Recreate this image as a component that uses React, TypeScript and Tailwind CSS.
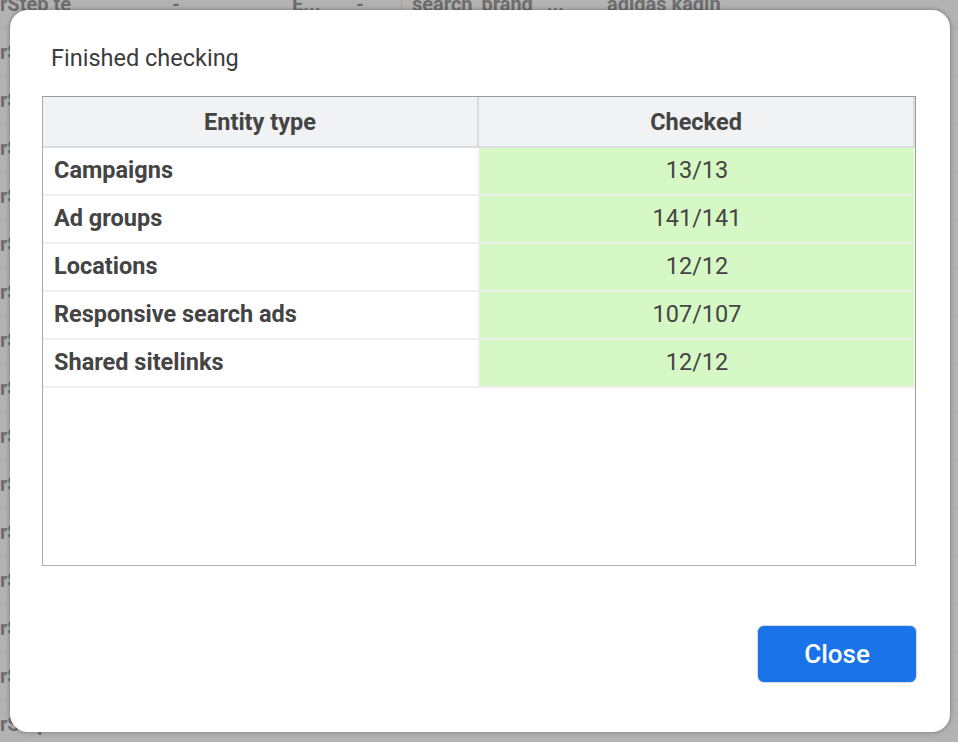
import React from 'react';

const rows = [
  { name: 'Campaigns', checked: '13/13' },
  { name: 'Ad groups', checked: '141/141' },
  { name: 'Locations', checked: '12/12' },
  { name: 'Responsive search ads', checked: '107/107' },
  { name: 'Shared sitelinks', checked: '12/12' },
];

// sheet behind the dialog (only the edges show)
function SheetRow({ full }: { full: boolean }) {
  return (
    <div className="flex h-[48px] shrink-0 items-center border-b border-[#a9a9a9] text-[20px] font-bold text-[#6e6e6e]">
      <div className="w-[172px]">rStep te</div>
      {full && (
        <>
          <div className="w-[120px]">-</div>
          <div className="w-[64px]">E...</div>
          <div className="w-[46px] border-r border-[#a0a0a0]">-</div>
          <div className="w-[195px] pl-[10px]">search_brand_ ...</div>
          <div className="w-[200px] pl-[10px]">adidas kadin</div>
        </>
      )}
    </div>
  );
}

export default function App() {
  return (
    <div className="relative h-[742px] w-[958px] overflow-hidden bg-[#b3b3b3] font-['Roboto',sans-serif]">
      {/* 背景のシート */}
      <div className="-mt-[20px] flex flex-col">
        {Array.from({ length: 17 }).map((_, i) => (
          <SheetRow key={i} full={i === 0} />
        ))}
      </div>

      {/* ダイアログ */}
      <div className="absolute left-[10px] top-[10px] flex h-[722px] w-[940px] flex-col rounded-[18px] bg-white pl-[32px] pr-[34px] shadow-[0_0_5px_rgba(0,0,0,0.35)]">
        <h2 className="mt-[34px] pl-[9px] text-[23.5px] font-normal leading-[28px] text-[#3c3c3c]">
          Finished checking
        </h2>

        <div className="mt-[24px] flex h-[470px] flex-col border border-[#9c9c9c] border-b-[#b0b0b0] border-l-[#aaaaaa]">
          {/* ヘッダー */}
          <div className="flex h-[51px] shrink-0 border-b-2 border-[#dcdde0] bg-[#f1f2f4] text-[23.5px] font-bold text-[#444]">
            <div className="flex w-[436px] items-center justify-center border-r-2 border-[#dcdcdc] pt-[3px]">Entity type</div>
            <div className="flex flex-1 items-center justify-center border-r-2 border-[#dcdcdc] pt-[3px]">Checked</div>
          </div>

          {/* 行 */}
          {rows.map((row) => (
            <div key={row.name} className="flex h-[48px] shrink-0 border-b-2 border-[#efefef] text-[23.5px] text-[#444]">
              <div className="flex w-[437px] items-center border-r-2 border-[#efefef] pl-[11px] font-bold">
                {row.name}
              </div>
              <div className="mr-[1px] flex flex-1 items-center justify-center bg-[#d5f8c4]">{row.checked}</div>
            </div>
          ))}
        </div>

        <div className="-mr-[1px] mt-[59px] flex justify-end">
          <button className="h-[58px] w-[160px] rounded-[7px] border border-[#d8dbe0] bg-[#1a73e8] text-[26px] font-medium text-white">
            Close
          </button>
        </div>
      </div>
    </div>
  );
}
